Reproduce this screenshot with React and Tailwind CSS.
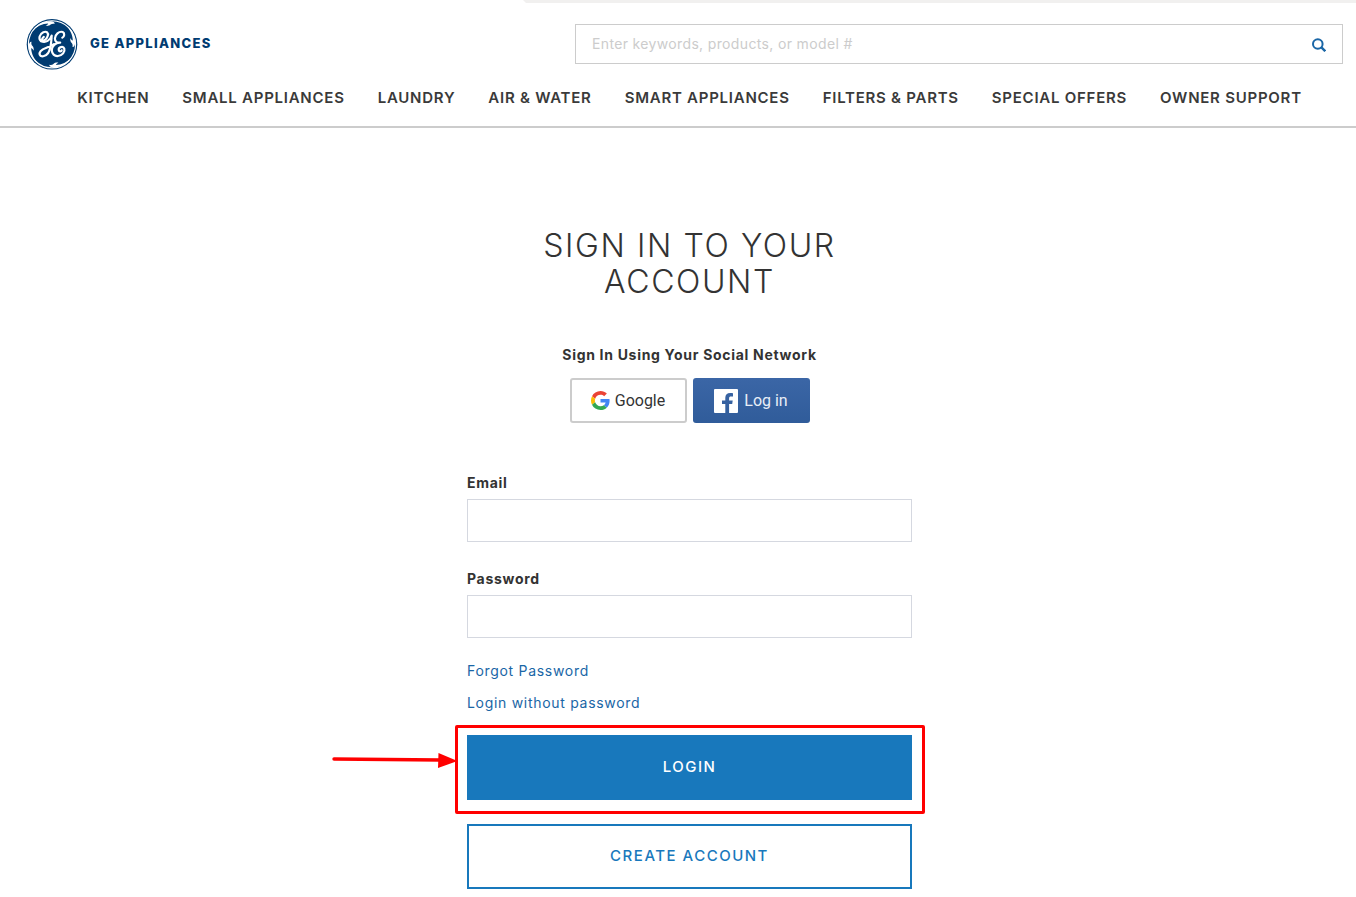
import React from "react";

const NAV = [
  "Kitchen",
  "Small Appliances",
  "Laundry",
  "Air & Water",
  "Smart Appliances",
  "Filters & Parts",
  "Special Offers",
  "Owner Support",
];

function Monogram() {
  return (
    <svg viewBox="0 0 52 52" className="size-[52px]" fill="none" aria-hidden="true">
      <circle cx="26" cy="26.3" r="25.3" fill="#003b71" />
      <circle cx="26" cy="26.3" r="23.6" stroke="#fff" strokeWidth="1.1" />
      {[0, 90, 180, 270].map((angle) => (
        <path
          key={angle}
          d="M6.500 13C10 7 17 2.800 25 3.200C27.800 3.400 29 4.600 28.600 5.800C27 5.400 25.600 5.700 24.600 6.600C23.300 7.900 21.300 8.300 19.600 7.900C21 7.300 21.800 6.500 22.200 5.500C16.500 5.500 10.500 8.600 6.500 13Z"
          fill="#fff"
          transform={`rotate(${angle} 26 26.3)`}
        />
      ))}
      <g stroke="#fff" strokeWidth="2.2" strokeLinecap="round" strokeLinejoin="round">
        <path d="M15 23C12.200 20.900 13.400 16 17.300 14.200C20.600 12.900 22.800 14.800 21.700 18C20.600 21.400 18.100 23 16.600 22.400C15.600 21.800 16.200 20 17.800 18.800" />
        <path d="M15 23C19.500 25.500 24.600 22 25.700 17.600C25.200 23.500 25.300 30.500 22.200 35C19.500 38.700 14.600 39.400 13.700 36.700C12.800 33.800 16.500 31.200 20.500 29.700C23.500 28.600 25.800 27.900 28 26.200" />
        <path d="M36.300 19.700C38.500 19 39 15 36.700 14C33.200 12.800 28.900 16.700 28.900 20.600C28.900 23.200 30.600 25 34.200 24.600C29.500 24.400 25.700 28.200 25.800 32.300C25.900 36 28.600 38.400 32 38C36.300 37.500 39.300 34 38.300 30.700C37.300 27.700 32.500 29 32.700 31.800C32.900 33.800 35.300 33.800 35.700 32.400" />
      </g>
    </svg>
  );
}

function GoogleMark() {
  return (
    <svg viewBox="0 0 48 48" className="size-[19px]" aria-hidden="true">
      <path fill="#ea4335" d="M24 9.5c3.54 0 6.71 1.22 9.21 3.6l6.85-6.85C35.9 2.38 30.47 0 24 0 14.62 0 6.51 5.38 2.56 13.22l7.98 6.19C12.43 13.72 17.74 9.5 24 9.5z" />
      <path fill="#4285f4" d="M46.98 24.55c0-1.57-.15-3.09-.38-4.55H24v9.02h12.94c-.58 2.96-2.26 5.48-4.78 7.18l7.73 6c4.51-4.18 7.09-10.36 7.09-17.65z" />
      <path fill="#fbbc05" d="M10.53 28.59c-.48-1.45-.76-2.99-.76-4.59s.27-3.14.76-4.59l-7.98-6.19C.92 16.46 0 20.12 0 24c0 3.88.92 7.54 2.56 10.78l7.97-6.19z" />
      <path fill="#34a853" d="M24 48c6.48 0 11.93-2.13 15.89-5.81l-7.73-6c-2.15 1.45-4.92 2.3-8.16 2.3-6.26 0-11.57-4.22-13.47-9.91l-7.98 6.19C6.51 42.62 14.62 48 24 48z" />
    </svg>
  );
}

function FacebookMark() {
  return (
    <svg viewBox="0 0 24 24" className="size-6" aria-hidden="true">
      <path
        fill="#fff"
        d="M1 0H23Q24 0 24 1V23Q24 24 23 24H15.1V15H18.200L18.700 11.500H15.100V9.200C15.100 8.100 15.600 7.500 17 7.500H19V4.200C18.400 4.100 17.300 4 16.200 4C13.100 4 11.300 5.700 11.300 8.800V11.500H8V15H11.300V24H1Q0 24 0 23V1Q0 0 1 0Z"
      />
    </svg>
  );
}

function Field({ id, label, type }) {
  return (
    <div className="flex flex-col">
      <label htmlFor={id} className="text-sm leading-5 font-bold tracking-wider">
        {label}
      </label>
      <input id={id} type={type} className="mt-[6px] h-[43px] w-full border border-[#d5d8e0] px-3 text-sm outline-none" />
    </div>
  );
}

function Header() {
  return (
    <header className="border-b-2 border-[#cccccc]">
      <div className="flex">
        <div className="w-[523px]" />
        <svg viewBox="0 0 3 3" className="size-[3px]" aria-hidden="true">
          <path d="M0 0H3V3Z" fill="#f1f0ef" />
        </svg>
        <div className="h-[3px] flex-1 bg-[#f1f0ef]" />
      </div>
      <div className="flex items-center justify-between pt-[15px] pr-[13px] pl-[26px]">
        <a href="#" className="flex items-center gap-3">
          <Monogram />
          <span className="text-[13px] font-extrabold tracking-widest text-[#003b71]">GE APPLIANCES</span>
        </a>
        <form className="flex h-10 w-[768px] items-center border border-[#cccccc] pr-4 pl-4">
          <input
            type="search"
            aria-label="Search"
            placeholder="Enter keywords, products, or model #"
            className="min-w-0 flex-1 text-sm tracking-wide outline-none placeholder:text-[#cccccc]"
          />
          <button type="button" aria-label="Submit search">
            <svg viewBox="0 0 15 15" className="size-[15px]" fill="none" stroke="#1a66a6" aria-hidden="true">
              <circle cx="6.8" cy="7" r="4.8" strokeWidth="2" />
              <path d="M10.400 10.400L14.300 14.200" strokeWidth="2.500" />
            </svg>
          </button>
        </form>
      </div>
      <nav className="flex justify-center gap-[33px] pt-[18px] pb-[18px] pl-[23px]">
        {NAV.map((item) => (
          <a key={item} href="#" className="text-[15px] leading-5 font-semibold tracking-wider whitespace-nowrap text-[#3a3a3a] uppercase">
            {item}
          </a>
        ))}
      </nav>
    </header>
  );
}

export default function App() {
  return (
    <div className="min-h-screen bg-white font-['Inter','Liberation_Sans',sans-serif] text-[#333333]">
      <Header />
      <main className="flex justify-center pt-[100px] pb-2 pl-[23px]">
        <form className="flex w-[445px] flex-col">
          <h1 className="px-14 text-center text-[32px] leading-9 font-light tracking-wider">SIGN IN TO YOUR ACCOUNT</h1>

          <h2 className="mt-[45px] text-center text-sm leading-5 font-bold tracking-wider">
            Sign In Using Your Social Network
          </h2>
          <div className="mt-[13px] flex justify-center gap-[6px] font-['Roboto',sans-serif] text-base">
            <button type="button" className="flex h-[45px] w-[117px] items-center justify-center gap-[5px] rounded-[3px] border-2 border-[#cccccc]">
              <GoogleMark />
              <span>Google</span>
            </button>
            <button type="button" className="flex h-[45px] w-[117px] items-center justify-center gap-[6px] rounded-[3px] bg-linear-to-b from-[#3b66a6] to-[#305c9a] text-[#e8eef7]">
              <FacebookMark />
              <span>Log in</span>
            </button>
          </div>

          <div className="mt-[50px] flex flex-col gap-[27px]">
            <Field id="email" label="Email" type="email" />
            <Field id="password" label="Password" type="password" />
          </div>

          <div className="mt-[23px] flex flex-col items-start gap-3 text-sm leading-5 tracking-wider text-[#1a66a6]">
            <a href="#">Forgot Password</a>
            <a href="#">Login without password</a>
          </div>

          <div className="relative mt-[22px]">
            <button type="submit" className="h-[65px] w-full bg-[#1878bc] text-[15px] font-medium tracking-widest text-white">
              LOGIN
            </button>
            <div className="pointer-events-none absolute -top-[10px] -right-[13px] -bottom-[14px] -left-3 rounded-[2px] border-[3px] border-[#ff0000]" />
            <svg viewBox="0 0 126 16" className="pointer-events-none absolute top-[18px] -left-[135px] h-4 w-[126px]" aria-hidden="true">
              <path d="M2 6L108 7" stroke="#ff0000" strokeWidth="3.4" strokeLinecap="round" />
              <path d="M106.500 0L125.500 8L106 15Z" fill="#ff0000" />
            </svg>
          </div>
          <button type="button" className="mt-6 h-[65px] border-2 border-[#1878bc] text-[15px] font-medium tracking-widest text-[#1878bc]">
            CREATE ACCOUNT
          </button>
        </form>
      </main>
    </div>
  );
}
